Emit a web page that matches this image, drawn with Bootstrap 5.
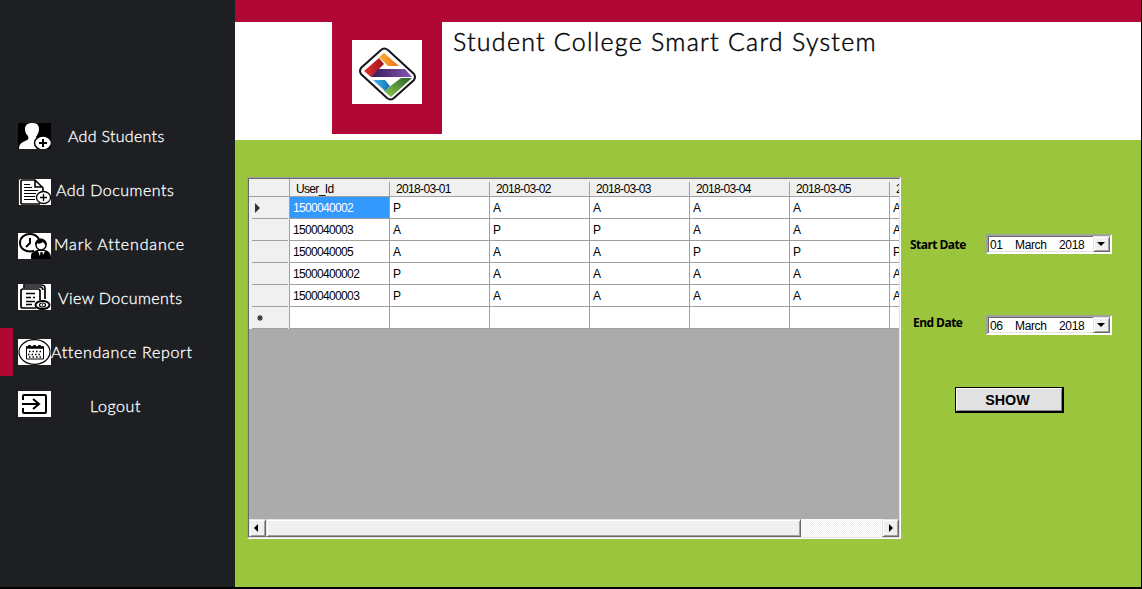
<!DOCTYPE html>
<html lang="en">
<head>
<meta charset="utf-8">
<title>Student College Smart Card System</title>
<link href="https://cdn.jsdelivr.net/npm/bootstrap@5.3.0/dist/css/bootstrap.min.css" rel="stylesheet">
<style>
body{width:1142px;height:589px;overflow:hidden;background:#000;font-family:"Liberation Sans",Arial,sans-serif;color:#000}
.side{width:235px;height:587px;background:#1e1f23;padding-top:110px}
.side-item{height:54px;position:relative;color:#fff;font:300 16px/52px Lato,sans-serif;padding-left:18px;text-decoration:none}
.side-item svg{width:33px;height:26px;flex:none;background:#fff;position:relative}
.side-item span{white-space:nowrap;position:relative;-webkit-text-stroke:.3px #fff}
.side-item.current::before{content:"";position:absolute;left:0;top:2px;width:13px;height:48px;background:#b10735}
.main{width:906px;height:587px;background:#9bc53d}
.strip{height:22px;background:#b10735}
.head{height:118px;background:#fff;padding-left:97px}
.brand{width:110px;height:112px;background:#b10735;padding:18px 20px}
.brand svg{display:block;background:#fff}
.head h1{font:300 25px/38px Lato,sans-serif;letter-spacing:1.25px;-webkit-text-stroke:.45px #000;color:#000;margin:0 0 0 11px;white-space:nowrap}
.work{padding:37px 0 0 12px}
.gridbox{width:654px;height:362px;background:#ababab;border:1px solid;border-color:#a0a0a0 #fff #fff #a0a0a0}
.gridin{height:360px;border:1px solid;border-color:#696969 #e3e3e3 #e3e3e3 #696969;overflow:hidden}
.gridrow{height:22px;width:741px;font-size:12px;line-height:23px;letter-spacing:-.66px}
.gridrow>div{width:100px;background:#fff;border-right:1px solid #a0a0a0;border-bottom:1px solid #a0a0a0;padding-left:3px;white-space:nowrap;flex:none}
.gridrow>div:first-child{width:41px;background:linear-gradient(#a0a0a0,#a0a0a0) 3px 100%/36px 1px no-repeat #f0f0f0;border-bottom:0;padding-left:6px;line-height:0}
.gridrow>.sel{background:#3399ff;color:#fff}
.gridrow.top{height:18px;line-height:21px}
.gridrow.top>div{background:linear-gradient(#a0a0a0,#a0a0a0) right 3px/1px 100% no-repeat #f0f0f0;border-right:0;padding-left:6px;}
.gridrow.top>div:first-child{background:#f0f0f0;border-right:1px solid #a0a0a0;border-bottom:1px solid #a0a0a0}
.scroller{height:18px;margin-top:190px;background:repeating-conic-gradient(#f0f0f0 0 25%,#fff 0 50%) 0 0/2px 2px}
.knob{background:#f0f0f0;border:1px solid;border-color:#e3e3e3 #696969 #696969 #e3e3e3;box-shadow:inset 1px 1px #fff,inset -1px -1px #a0a0a0;height:18px}
.filters{width:240px;padding-top:57px}
.filters label{height:20px;font:700 12px/20px "Open Sans",sans-serif;letter-spacing:-.55px}
.datebox{width:126px;height:20px;background:#fff;border:2px solid;border-color:#a0a0a0 #fff #fff #a0a0a0;box-shadow:inset 1px 1px #696969,inset 0 -1px #e3e3e3;font-size:12px;line-height:18px;letter-spacing:-.35px;padding-left:2px}
.datebox .knob{width:17px;height:16px;margin-left:auto}
.showbtn{width:109px;height:26px;margin:52px 0 0 54px;background:#e1e1e1;border:1px solid #000;border-right-width:2px;border-bottom-width:2px;border-radius:0;box-shadow:inset 1px 1px #fff,inset -1px -1px #888;font:700 14.3px/25px "Liberation Sans",sans-serif;padding:0 3px 0 0;color:#000}
</style>
</head>
<body>
<div class="d-flex">
<nav class="side">
<a class="side-item d-flex"><svg viewBox="0 0 33 26" style="top:13px"><rect width="33" height="26"/><path d="M14 0c5 0 7 2 7 6 0 4-2 6-3 8 0 3 2 4 5 5 3 2 4 4 4 7H1c0-5 2-6 6-8 3-1 4-2 3-5-2-2-3-4-3-7 0-4 3-6 7-6z" fill="#fff"/><ellipse cx="25" cy="20" rx="8.5" ry="7" fill="#fff" stroke="#000" stroke-width="1.5"/><path d="M21 20h8M25 16v8" stroke="#000" stroke-width="2"/></svg><span style="left:17px;letter-spacing:.3px">Add Students</span></a>
<a class="side-item d-flex"><svg viewBox="0 0 33 26" style="top:15px" fill="none" stroke="#000"><path d="M0 0h2M0 1v25M3 25V2q0-1 1-1h13l8 8v5M17 1v7h8M3 25h19" stroke-width="1.6"/><path d="M6 5.500h6M6 8.500h8M6 11.500h14M6 14.500h12M6 17.500h11M6 20.500h11" stroke-width="1.2"/><ellipse cx="25.500" cy="18.500" rx="7" ry="6" fill="#fff" stroke-width="1.300"/><path d="M22 18.500h7M25.500 15v7" stroke-width="1.300"/></svg><span style="left:5px;letter-spacing:.5px">Add Documents</span></a>
<a class="side-item d-flex"><svg viewBox="0 0 33 26" style="top:15px"><path d="M16 18C7 20 2 15 2 10 2 4 7 1 12 1c4 0 7 2 9 5M12 5v5l-4 4" fill="none" stroke="#000" stroke-width="2"/><path d="M13 26v-3c0-4 4-5 6-6h8c4 1 6 3 6 9z"/><path d="m20 18 3 8 4-8z" fill="#fff"/><path d="m22.500 19-1 7h4l-1-7z"/><circle cx="23" cy="12" r="5" fill="#fff" stroke="#000" stroke-width="1.500"/><path d="M17 12c0-9 12-8 12 0-2 0-3-2-4-3-3 2-5 2-6 1z"/></svg><span style="left:3px;letter-spacing:.85px">Mark Attendance</span></a>
<a class="side-item d-flex"><svg viewBox="0 0 33 26" style="top:12px" fill="none" stroke="#000" stroke-width="1.700"><path d="M18 24H5q-2 0-2-2V7q0-2 2-2h15q2 0 2 2v9M6 4V1h17q4 0 4 3v11M7 3h16q2 1 2 3"/><path d="M8 9.500h9M8 13.500h5m2 0h2M8 17.500h9M8 20.500h6" stroke-width="1.300"/><ellipse cx="24.500" cy="21" rx="7" ry="4" fill="#fff" stroke-width="2"/><ellipse cx="24.500" cy="21" rx="3" ry="2" stroke-width="1.200"/><path d="M24 21h1"/></svg><span style="left:7px;letter-spacing:.45px">View Documents</span></a>
<a class="side-item current d-flex"><svg viewBox="0 0 33 26" style="top:13px" fill="none" stroke="#000"><ellipse cx="16.500" cy="13" rx="15.500" ry="12.300" stroke-width="1.200"/><path d="M8.500 8h17v12h-17z"/><path d="M8 8.500h18M11.500 6v3M16.500 6v3M21.500 6v3" stroke-width="2.500"/><path d="M11 12.500h14M10 15.500h14M11 18h12" stroke-dasharray="1.500 2" stroke-width="1.500"/></svg><span style="left:0;letter-spacing:.68px">Attendance Report</span></a>
<a class="side-item d-flex"><svg viewBox="0 0 33 26" style="top:11px" fill="none" stroke="#000" stroke-width="2"><path d="M5 9V5q0-1 1-1h21q1 0 1 1v16q0 1-1 1H6q-1 0-1-1v-4M4 13h16M15 8l6 5-6 5"/></svg><span style="left:39px;letter-spacing:.6px">Logout</span></a>
</nav>
<main class="main">
<div class="strip"></div>
<header class="head d-flex">
<div class="brand"><svg width="70" height="64" viewBox="0 0 70 64"><defs><linearGradient id="a"><stop stop-color="#e63329"/><stop offset="1" stop-color="#9c1320"/></linearGradient><linearGradient id="b"><stop stop-color="#fbb02d"/><stop offset="1" stop-color="#f26b22"/></linearGradient><linearGradient id="c"><stop stop-color="#351a58"/><stop offset="1" stop-color="#8558b4"/></linearGradient><linearGradient id="d" x1="1" x2="0" y2="1"><stop stop-color="#27632e"/><stop offset="1" stop-color="#91c84b"/></linearGradient><linearGradient id="e"><stop stop-color="#40b8ed"/><stop offset="1" stop-color="#1472b8"/></linearGradient></defs><path d="M29 10q3-3 7 0l26 24q2 3 0 6L42 58q-3 3-7 0L9 34q-2-3 0-6z" fill="#fff" stroke="#15151a" stroke-width="2"/><path d="M12 31 27 18l5 6-13 13z" fill="url(#a)"/><path d="m27 17 5-4 15 13H36z" fill="url(#b)"/><path d="M26 29h27l7 8H19z" fill="url(#c)"/><path d="M60 38 39 57l-7-6 17-13z" fill="url(#d)"/><path d="M21 40h12l5 6-5 5z" fill="url(#e)"/></svg></div>
<h1>Student College Smart Card System</h1>
</header>
<div class="work d-flex">
<div class="gridbox"><div class="gridin">
<div class="gridrow top d-flex"><div></div><div>User_Id</div><div>2018-03-01</div><div>2018-03-02</div><div>2018-03-03</div><div>2018-03-04</div><div>2018-03-05</div><div>2018-03-06</div></div>
<div class="gridrow d-flex"><div><svg width="6" height="22"><path d="M0 6v10l5-5z" fill="#333"/></svg></div><div class="sel">1500040002</div><div>P</div><div>A</div><div>A</div><div>A</div><div>A</div><div>A</div></div>
<div class="gridrow d-flex"><div></div><div>1500040003</div><div>A</div><div>P</div><div>P</div><div>A</div><div>A</div><div>A</div></div>
<div class="gridrow d-flex"><div></div><div>1500040005</div><div>A</div><div>A</div><div>A</div><div>P</div><div>P</div><div>P</div></div>
<div class="gridrow d-flex"><div></div><div>15000400002</div><div>P</div><div>A</div><div>A</div><div>A</div><div>A</div><div>A</div></div>
<div class="gridrow d-flex"><div></div><div>15000400003</div><div>P</div><div>A</div><div>A</div><div>A</div><div>A</div><div>A</div></div>
<div class="gridrow d-flex"><div style="padding-left:8px"><svg width="6" height="22"><path d="M3 8v6M0 11h6M1 9l4 4M5 9l-4 4" stroke="#333" stroke-width="1.100"/></svg></div><div></div><div></div><div></div><div></div><div></div><div></div><div></div></div>
<div class="scroller d-flex"><div class="knob" style="width:17px"><svg class="d-block" width="15" height="16"><path d="M8 4v8L4 8z"/></svg></div><div class="knob" style="width:535px"></div><div class="knob ms-auto" style="width:17px"><svg class="d-block" width="15" height="16"><path d="M6 4v8l4-4z"/></svg></div></div>
</div></div>
<div class="filters">
<div class="d-flex"><label style="width:85px;padding-left:9px;padding-top:1px">Start Date</label><div class="datebox d-flex"><span style="width:25px">01</span><span style="width:44px">March</span><span>2018</span><div class="knob"><svg class="d-block" width="15" height="14"><path d="M3 5h8l-4 4z"/></svg></div></div></div>
<div class="d-flex" style="margin-top:61px"><label style="width:85px;padding-left:12px;margin-top:-2px">End Date</label><div class="datebox d-flex"><span style="width:25px">06</span><span style="width:44px">March</span><span>2018</span><div class="knob"><svg class="d-block" width="15" height="14"><path d="M3 5h8l-4 4z"/></svg></div></div></div>
<button class="btn showbtn d-block">SHOW</button>
</div>
</div>
</main>
</div>
<script src="https://cdn.jsdelivr.net/npm/bootstrap@5.3.0/dist/js/bootstrap.bundle.min.js"></script>
</body>
</html>
